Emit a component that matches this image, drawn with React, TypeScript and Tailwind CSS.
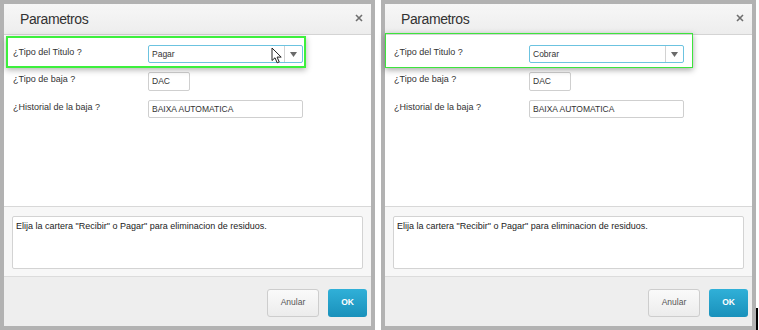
const font = `font-["Liberation_Sans",Arial,sans-serif]`

function Cursor() {
  return (
    <svg width="12" height="17" viewBox="0 0 12 17" className="absolute left-[267px] top-[43px]">
      <path d="M1 1 L1 13.5 L4 10.8 L6.2 15.8 L8.2 14.9 L6.1 10.1 L10.2 10.1 Z" fill="white" stroke="#222" strokeWidth="1" strokeLinejoin="round" />
    </svg>
  )
}

function Panel({ value, left }: { value: string; left: boolean }) {
  return (
    <div className={`relative w-[375px] h-[330px] border-4 border-[#b2b2b2] flex flex-col ${font}`}>
      <div className="h-[31px] bg-gradient-to-b from-[#f7f7f7] to-[#ededed] border-b border-[#d4d4d4] flex items-center justify-between pl-4 pr-[8px]">
        <span className="text-[14px] tracking-[-0.4px] text-[#333] mt-[1px]">Parametros</span>
        <svg width="8" height="8" viewBox="0 0 8 8" className="mb-[2px]">
          <path d="M1 1 L7 7 M7 1 L1 7" stroke="#6f6f6f" strokeWidth="1.6" />
        </svg>
      </div>

      <div className="flex-1 bg-white flex flex-col gap-[9px] pt-[10px] pl-[9px] text-[#333]">
        <div className="flex items-start">
          <div className="w-[135px] text-[9px] leading-[12px] pt-[1px]">¿Tipo del Titulo ?</div>
          <div className="w-[155px] h-[18px] border border-[#6cc3e0] rounded-[2px] flex bg-white">
            <div className="flex-1 flex items-center px-[3px] text-[8.5px]">{value}</div>
            <div className="w-[18px] border-l border-[#d2d2d2] flex items-center justify-center">
              <svg width="7" height="5" viewBox="0 0 7 5">
                <path d="M0 0 L7 0 L3.5 5 Z" fill="#6a6a6a" />
              </svg>
            </div>
          </div>
        </div>
        <div className="flex items-start">
          <div className="w-[135px] text-[9px] leading-[12px] pt-[1px]">¿Tipo de baja ?</div>
          <div className="w-[42px] h-[19px] border border-[#cfcfcf] rounded-[2px] flex items-center px-[3px] text-[8.5px]">DAC</div>
        </div>
        <div className="flex items-start">
          <div className="w-[135px] text-[9px] leading-[12px] pt-[1px]">¿Historial de la baja ?</div>
          <div className="w-[155px] h-[18px] border border-[#cfcfcf] rounded-[2px] flex items-center px-[3px] text-[8.5px]">BAIXA AUTOMATICA</div>
        </div>
      </div>

      <div className="h-[70px] bg-[#f7f7f7] border-t border-[#d8d8d8] px-[8px] pt-[9px] pb-[7px]">
        <div className="h-full bg-white border border-[#d3d3d3] rounded-[2px] px-[3px] pt-[3px] text-[9px] leading-[12px] text-[#222]">
          Elija la cartera "Recibir" o Pagar" para eliminacion de residuos.
        </div>
      </div>

      <div className="h-[50px] bg-[#eeeeee] border-t border-[#dcdcdc] flex items-center justify-end gap-[9px] pr-[4px] pt-[2px]">
        <button className="w-[52px] h-[28px] border border-[#cdcdcd] rounded-[3px] bg-gradient-to-b from-[#fafafa] to-[#ececec] text-[8.5px] text-[#555]">
          Anular
        </button>
        <button className="w-[39px] h-[28px] rounded-[3px] bg-gradient-to-b from-[#30b0d8] to-[#1991bb] text-[8.5px] font-bold text-white">
          OK
        </button>
      </div>

      {left ? (
        <div className="absolute left-[2px] top-[32px] w-[300px] h-[32px] border-2 border-[#3df03d] shadow-[0_2px_6px_rgba(0,0,0,0.3)]" />
      ) : (
        <div className="absolute left-0 top-[29px] w-[308px] h-[35px] border border-[#3de43d] shadow-[0_2px_6px_rgba(0,0,0,0.35)]" />
      )}
      {left && <Cursor />}
    </div>
  )
}

export default function App() {
  return (
    <div className="relative w-[759px] h-[330px] bg-white flex gap-[6px] overflow-hidden">
      <Panel value="Pagar" left={true} />
      <Panel value="Cobrar" left={false} />
      <div className="absolute left-[756px] top-[308px] w-[2px] h-[22px] bg-black" />
    </div>
  )
}
